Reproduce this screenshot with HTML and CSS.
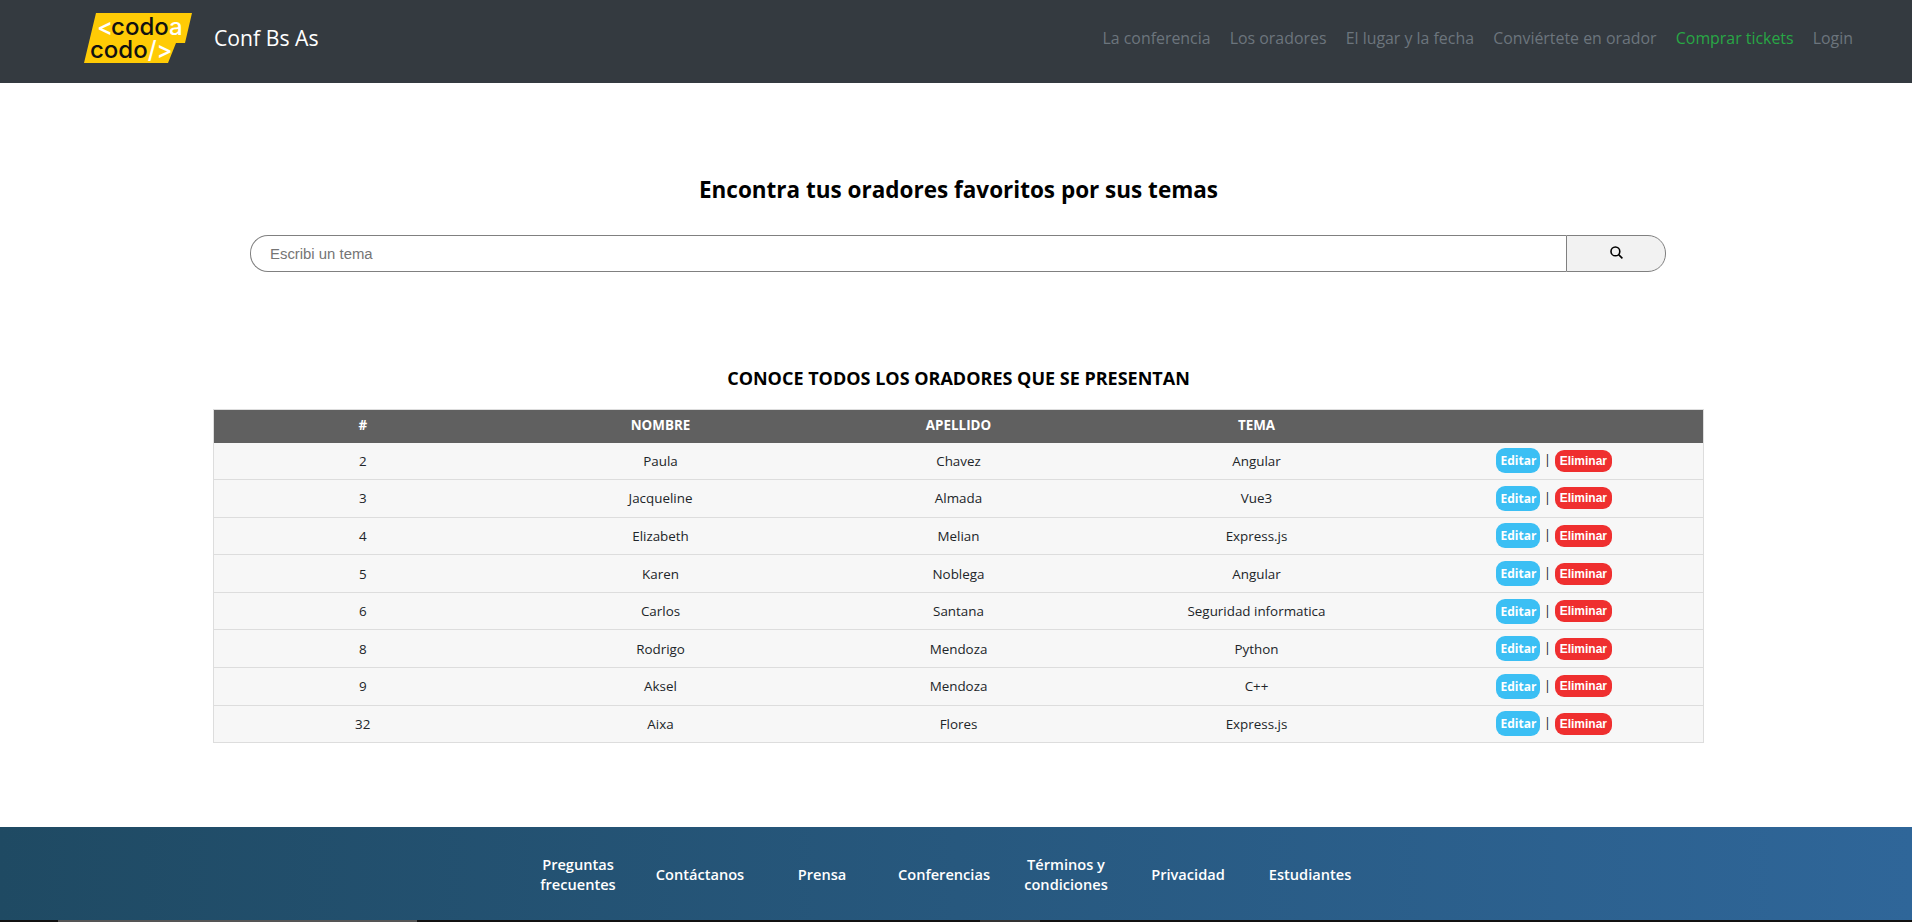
FILE: index.html
```html
<!DOCTYPE html>
<html lang="en">

<head>
    <meta charset="UTF-8">
    <meta name="viewport" content="width=device-width, initial-scale=1.0">
    <title>Conf Bs As</title>
    <link rel="stylesheet" href="styles.css">
</head>

<body>

    <header class="topbar">
        <a class="brand" href="#">
            <svg class="logo" viewBox="0 0 108 50" aria-label="Codo a Codo">
                <polygon class="logo-bg" points="12,0 108,0 101,30 92,30 84,50 0,50"></polygon>
                <text class="logo-text" x="13" y="22"><tspan class="logo-white">&lt;</tspan><tspan dx="-2">codo</tspan><tspan class="logo-white">a</tspan></text>
                <text class="logo-text" x="6" y="45">codo<tspan class="logo-white">/&gt;</tspan></text>
            </svg>
            <span class="brand-name">Conf Bs As</span>
        </a>
        <nav class="nav-links">
            <a href="#">La conferencia</a>
            <a href="#">Los oradores</a>
            <a href="#">El lugar y la fecha</a>
            <a href="#">Conviértete en orador</a>
            <a href="#" class="nav-green">Comprar tickets</a>
            <a href="#">Login</a>
        </nav>
    </header>

    <main class="content">
        <h2 class="search-title">Encontra tus oradores favoritos por sus temas</h2>

        <form class="search-form">
            <input type="text" class="search-input" placeholder="Escribi un tema">
            <button type="button" class="search-button" aria-label="Buscar">
                <svg class="search-icon" viewBox="0 0 13 13">
                    <circle cx="5.4" cy="5.4" r="4.4"></circle>
                    <line x1="8.6" y1="8.6" x2="12.4" y2="12.4"></line>
                </svg>
            </button>
        </form>

        <h3 class="table-title">CONOCE TODOS LOS ORADORES QUE SE PRESENTAN</h3>

        <table class="speakers">
            <thead>
                <tr>
                    <th>#</th>
                    <th>NOMBRE</th>
                    <th>APELLIDO</th>
                    <th>TEMA</th>
                    <th></th>
                </tr>
            </thead>
            <tbody>
                <tr>
                    <td>2</td><td>Paula</td><td>Chavez</td><td>Angular</td>
                    <td><a class="btn-edit" href="#">Editar</a> | <a class="btn-delete" href="#">Eliminar</a></td>
                </tr>
                <tr>
                    <td>3</td><td>Jacqueline</td><td>Almada</td><td>Vue3</td>
                    <td><a class="btn-edit" href="#">Editar</a> | <a class="btn-delete" href="#">Eliminar</a></td>
                </tr>
                <tr>
                    <td>4</td><td>Elizabeth</td><td>Melian</td><td>Express.js</td>
                    <td><a class="btn-edit" href="#">Editar</a> | <a class="btn-delete" href="#">Eliminar</a></td>
                </tr>
                <tr>
                    <td>5</td><td>Karen</td><td>Noblega</td><td>Angular</td>
                    <td><a class="btn-edit" href="#">Editar</a> | <a class="btn-delete" href="#">Eliminar</a></td>
                </tr>
                <tr>
                    <td>6</td><td>Carlos</td><td>Santana</td><td>Seguridad informatica</td>
                    <td><a class="btn-edit" href="#">Editar</a> | <a class="btn-delete" href="#">Eliminar</a></td>
                </tr>
                <tr>
                    <td>8</td><td>Rodrigo</td><td>Mendoza</td><td>Python</td>
                    <td><a class="btn-edit" href="#">Editar</a> | <a class="btn-delete" href="#">Eliminar</a></td>
                </tr>
                <tr>
                    <td>9</td><td>Aksel</td><td>Mendoza</td><td>C++</td>
                    <td><a class="btn-edit" href="#">Editar</a> | <a class="btn-delete" href="#">Eliminar</a></td>
                </tr>
                <tr>
                    <td>32</td><td>Aixa</td><td>Flores</td><td>Express.js</td>
                    <td><a class="btn-edit" href="#">Editar</a> | <a class="btn-delete" href="#">Eliminar</a></td>
                </tr>
            </tbody>
        </table>
    </main>

    <footer class="footer">
        <a href="#">Preguntas frecuentes</a>
        <a href="#">Contáctanos</a>
        <a href="#">Prensa</a>
        <a href="#">Conferencias</a>
        <a href="#">Términos y condiciones</a>
        <a href="#">Privacidad</a>
        <a href="#">Estudiantes</a>
    </footer>
    <div class="bottom-strip"></div>

</body>

</html>
```

FILE: styles.css
```css
html {
    height: 100%;
}

body {
    font-family: "Open Sans", sans-serif;
    font-size: 13.4px;
    margin: 0;
    height: 100%;
    display: flex;
    flex-direction: column;
    background-color: #fff;
    color: #212529;
}

a {
    text-decoration: none;
}

/* top bar */
.topbar {
    height: 83px;
    flex-shrink: 0;
    background-color: #343a40;
    display: flex;
    justify-content: space-between;
    align-items: center;
    padding: 0 59px 8px 84px;
    box-sizing: border-box;
}

.brand {
    display: flex;
    align-items: center;
    gap: 22px;
}

.logo {
    width: 108px;
    height: 50px;
    display: block;
}

.logo-bg {
    fill: #ffcb05;
}

.logo-text {
    font-family: "Inter", sans-serif;
    font-size: 24px;
    font-weight: 500;
    fill: #111;
}

.logo-white {
    fill: #fff;
}

.brand-name {
    color: #fff;
    font-size: 21.2px;
}

.nav-links {
    display: flex;
    gap: 19.2px;
    font-size: 15.9px;
}

.nav-links a {
    color: #6c757d;
}

.nav-links .nav-green {
    color: #28a745;
}

/* middle */
.content {
    width: 1491px;
    margin: 0 208px 0 213px;
}

.search-title {
    font-size: 22.5px;
    font-weight: 700;
    color: #000;
    text-align: center;
    margin: 90px 0 0;
    line-height: 34px;
}

.search-form {
    display: flex;
    width: 1416px;
    height: 37px;
    margin: 28px 0 0 37px;
    box-sizing: border-box;
}

.search-input {
    flex: 1;
    font-family: "Liberation Sans", Arial, sans-serif;
    font-size: 14.9px;
    padding: 0 19px;
    border: 1px solid #808080;
    border-right: none;
    border-radius: 18px 0 0 18px;
    outline: none;
    box-sizing: border-box;
}

.search-input::placeholder {
    color: #757575;
}

.search-button {
    width: 100px;
    background-color: #f2f2f2;
    border: 1px solid #808080;
    border-radius: 0 18px 18px 0;
    padding: 0;
    display: flex;
    align-items: center;
    justify-content: center;
    box-sizing: border-box;
}

.search-icon {
    width: 13px;
    height: 13px;
    margin-top: -3px;
    fill: none;
    stroke: #000;
    stroke-width: 1.6;
}

.table-title {
    font-size: 18px;
    font-weight: 700;
    color: #000;
    text-align: center;
    margin: 91px 0 0;
    line-height: 30px;
}

/* table */
.speakers {
    width: 1491px;
    table-layout: fixed;
    border-collapse: collapse;
    margin: 16px 0 0;
    border: 1px solid #ddd;
}

.speakers th {
    background-color: #606060;
    color: #fff;
    font-size: 13.4px;
    font-weight: 700;
    height: 33px;
    padding: 0 0 2px;
    box-sizing: border-box;
}

.speakers td {
    background-color: #f7f7f7;
    border-bottom: 1px solid #ddd;
    text-align: center;
    height: 36.6px;
    padding: 0;
    color: #212529;
}

.btn-edit,
.btn-delete {
    display: inline-block;
    color: #fff;
    font-size: 12px;
    font-weight: 700;
    vertical-align: middle;
}

.btn-edit {
    background-color: #3bbff4;
    padding: 0 4px;
    line-height: 25px;
    border-radius: 9px;
}

.btn-delete {
    background-color: #ef2f2f;
    font-family: "Liberation Sans", Arial, sans-serif;
    padding: 0 5px;
    line-height: 22px;
    border-radius: 9px;
}

/* footer */
.footer {
    margin-top: auto;
    height: 93px;
    flex-shrink: 0;
    display: flex;
    justify-content: center;
    align-items: center;
    background: linear-gradient(to right, #1f4a63, #2f6699);
    padding-right: 24px;
    box-sizing: border-box;
}

.footer a {
    width: 122px;
    box-sizing: border-box;
    padding: 0 10px;
    color: #fff;
    font-size: 14.6px;
    font-weight: 600;
    line-height: 20px;
    text-align: center;
}

.bottom-strip {
    height: 2px;
    flex-shrink: 0;
    background: linear-gradient(to right, #111 58px, #555 58px, #555 417px, #111 417px, #111 980px, #333 980px, #333 1040px, #111 1040px);
}
```
